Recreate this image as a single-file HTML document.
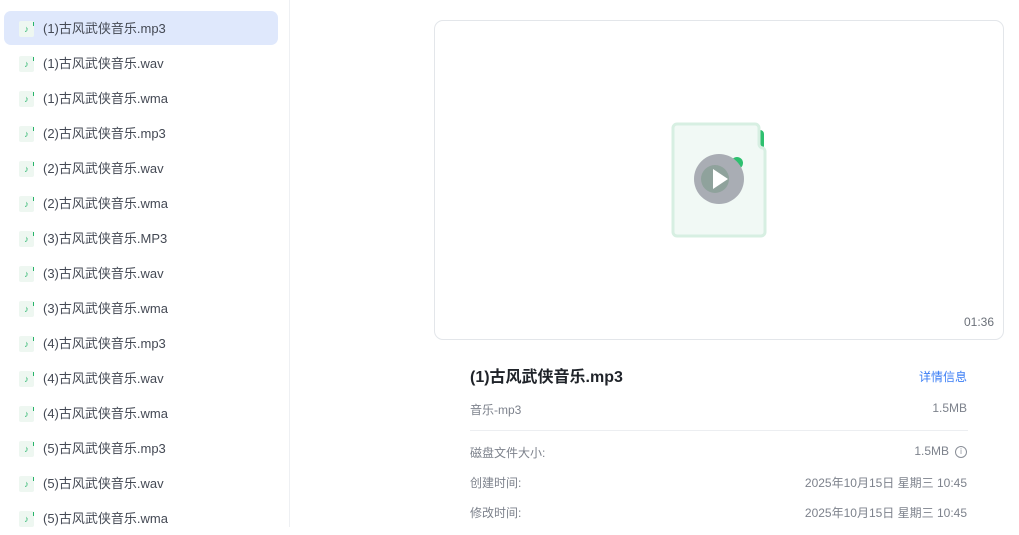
<!DOCTYPE html>
<html><head><meta charset="utf-8"><style>
*{margin:0;padding:0;box-sizing:border-box}
body{width:1019px;height:527px;overflow:hidden;background:#fff;font-family:"Liberation Sans","Noto Sans CJK SC",sans-serif;position:relative}
.side{position:absolute;left:0;top:0;width:290px;height:527px;border-right:1px solid #eef0f3}
.it{position:absolute;left:4px;width:274px;height:34px;border-radius:7px;display:flex;align-items:center;font-size:13px;color:#444954;line-height:14px;padding-top:1px}
.it.sel{background:#dfe8fc}
.ic{width:15px;height:16px;margin-left:15px;margin-right:9px;background:#eef7f1;border-radius:2px;position:relative;font-size:9px;color:#27b46a;line-height:16px;text-align:center}
.ic:after{content:"";position:absolute;right:0;top:1px;width:1.5px;height:4px;background:#27b46a}
.box{position:absolute;left:434px;top:20px;width:570px;height:320px;border:1px solid #e3e6ea;border-radius:9px}
.t{position:absolute;font-size:12px;color:#7d828c}
</style></head><body>
<div class="side">
<div class="it sel" style="top:11px"><div class="ic">♪</div>(1)古风武侠音乐.mp3</div>
<div class="it" style="top:46px"><div class="ic">♪</div>(1)古风武侠音乐.wav</div>
<div class="it" style="top:81px"><div class="ic">♪</div>(1)古风武侠音乐.wma</div>
<div class="it" style="top:116px"><div class="ic">♪</div>(2)古风武侠音乐.mp3</div>
<div class="it" style="top:151px"><div class="ic">♪</div>(2)古风武侠音乐.wav</div>
<div class="it" style="top:186px"><div class="ic">♪</div>(2)古风武侠音乐.wma</div>
<div class="it" style="top:221px"><div class="ic">♪</div>(3)古风武侠音乐.MP3</div>
<div class="it" style="top:256px"><div class="ic">♪</div>(3)古风武侠音乐.wav</div>
<div class="it" style="top:291px"><div class="ic">♪</div>(3)古风武侠音乐.wma</div>
<div class="it" style="top:326px"><div class="ic">♪</div>(4)古风武侠音乐.mp3</div>
<div class="it" style="top:361px"><div class="ic">♪</div>(4)古风武侠音乐.wav</div>
<div class="it" style="top:396px"><div class="ic">♪</div>(4)古风武侠音乐.wma</div>
<div class="it" style="top:431px"><div class="ic">♪</div>(5)古风武侠音乐.mp3</div>
<div class="it" style="top:466px"><div class="ic">♪</div>(5)古风武侠音乐.wav</div>
<div class="it" style="top:501px"><div class="ic">♪</div>(5)古风武侠音乐.wma</div>
</div>
<div class="box">
<svg style="position:absolute;left:234px;top:101px" width="100" height="118" viewBox="0 0 100 118">
<path d="M88 8 h3 a4 4 0 0 1 4 4 v18 h-3 a4 4 0 0 1-4-4z" fill="#2ec06f"/>
<path d="M8 2 h78 a4 4 0 0 1 4 4 v16 a4 4 0 0 0 4 4 h0 a4 4 0 0 1 2 3 v81 a4 4 0 0 1-4 4 h-84 a4 4 0 0 1-4-4 v-104 a4 4 0 0 1 4-4z" fill="#f1f9f5" stroke="#d7efe2" stroke-width="3"/>
<circle cx="68" cy="41" r="6" fill="#2ec06f"/>
<circle cx="42" cy="72" r="6" fill="#2ec06f"/>
<circle cx="50" cy="57" r="25" fill="#a9adb4"/>
<circle cx="46" cy="57" r="14" fill="#7f9b8c" opacity=".6"/>
<path d="M44 47 L59 57 L44 67z" fill="#fff"/>
</svg>
<div class="t" style="right:9px;top:294px;color:#6b7079">01:36</div>
</div>
<div style="position:absolute;left:470px;top:363px;font-size:16px;font-weight:bold;color:#1f2329">(1)古风武侠音乐.mp3</div>
<div class="t" style="left:919px;top:368px;color:#3b7ef5">详情信息</div>
<div class="t" style="left:470px;top:401px">音乐-mp3</div>
<div class="t" style="right:52px;top:401px">1.5MB</div>
<div style="position:absolute;left:470px;top:430px;width:498px;height:1px;background:#eceef1"></div>
<div class="t" style="left:470px;top:444px">磁盘文件大小:</div>
<div class="t" style="right:70px;top:444px">1.5MB</div>
<div style="position:absolute;left:955px;top:446px;width:12px;height:12px;border:1px solid #8a8f98;border-radius:50%;font-size:8px;color:#8a8f98;text-align:center;line-height:10px">i</div>
<div class="t" style="left:470px;top:474px">创建时间:</div>
<div class="t" style="right:52px;top:474px">2025年10月15日 星期三 10:45</div>
<div class="t" style="left:470px;top:504px">修改时间:</div>
<div class="t" style="right:52px;top:504px">2025年10月15日 星期三 10:45</div>
</body></html>
